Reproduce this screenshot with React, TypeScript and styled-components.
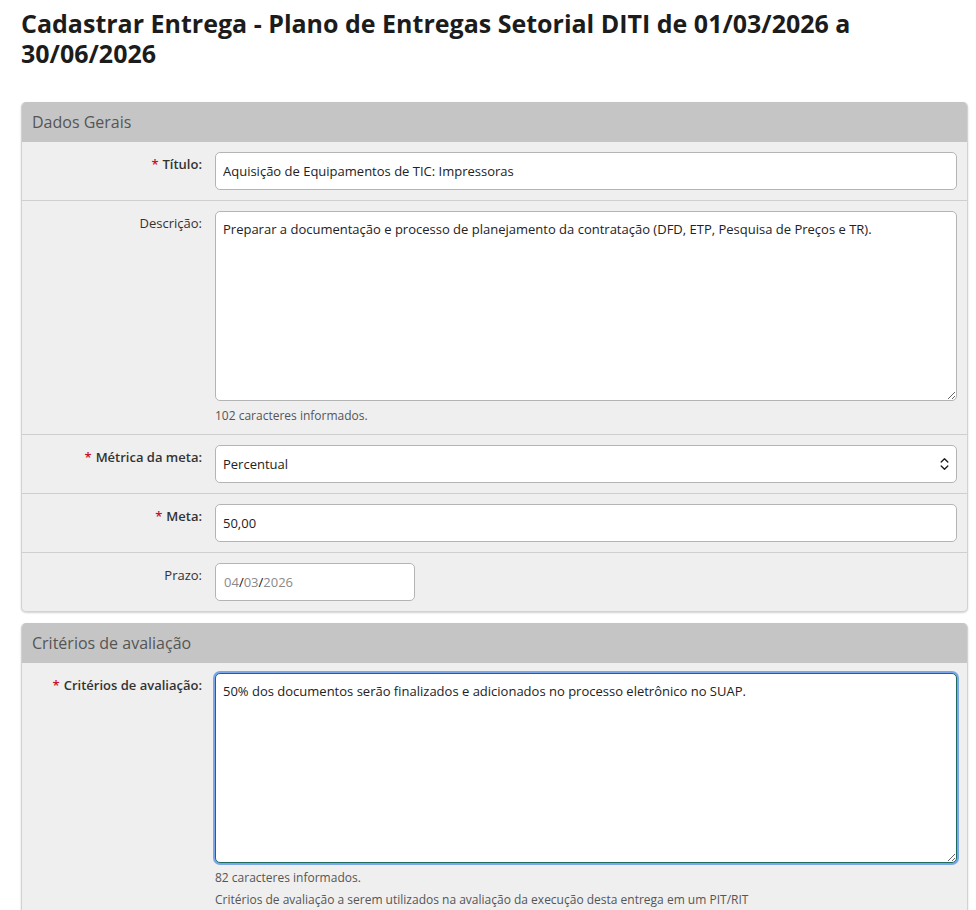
import React from "react";
import styled, { createGlobalStyle, css } from "styled-components";

const GlobalStyle = createGlobalStyle`
  html, body {
    margin: 0;
    padding: 0;
    background: #ffffff;
    font-family: "Open Sans", "Liberation Sans", sans-serif;
    color: #333;
  }
  * { box-sizing: border-box; }
`;

const Page = styled.div`
  padding: 8px 8px 0 21px;
`;

const Title = styled.h1`
  margin: 0 0 34px;
  font-size: 25px;
  line-height: 30px;
  font-weight: 700;
  color: #1c1c1c;
`;

const Panel = styled.section`
  background: #efefef;
  border: 1px solid #d2d2d2;
  border-top: none;
  border-radius: 5px;
  box-shadow: 0 1px 2px rgba(0, 0, 0, 0.18);
  margin-bottom: 11px;
  overflow: hidden;
`;

const PanelHeader = styled.h2`
  margin: 0;
  height: 40px;
  display: flex;
  align-items: center;
  padding: 0 10px;
  background: #c5c5c5;
  font-size: 16px;
  font-weight: 400;
  color: #555;
`;

const Row = styled.div`
  display: grid;
  grid-template-columns: 180px 1fr;
  column-gap: 13px;
  padding: 10px 10px 10px 0;
  & + & {
    border-top: 1px solid #cfcfcf;
  }
`;

const Label = styled.label<{ $required?: boolean }>`
  text-align: right;
  font-size: 13px;
  line-height: 20px;
  padding-top: 2px;
  color: #333;
  font-weight: ${(p) => (p.$required ? 600 : 400)};
`;

const Star = styled.span`
  color: #c8102e;
  margin-right: 4px;
`;

const Field = styled.div`
  display: flex;
  flex-direction: column;
  min-width: 0;
`;

const fieldBase = css`
  font-family: "Open Sans", "Liberation Sans", sans-serif;
  font-size: 13px;
  color: #222;
  background: #fff;
  border: 1px solid #b4b4b4;
  border-radius: 5px;
  outline: none;
`;

const TextInput = styled.input`
  ${fieldBase};
  width: 100%;
  height: 38px;
  padding: 0 7px;
`;

const TextArea = styled.textarea<{ $focused?: boolean }>`
  ${fieldBase};
  width: 100%;
  height: 190px;
  padding: 7px 7px;
  line-height: 20px;
  resize: vertical;
  display: block;
  ${(p) =>
    p.$focused &&
    css`
      border-color: #1e6b5c;
      box-shadow: 0 0 0 2px #7aa7ec;
    `}
`;

const SelectWrap = styled.div`
  position: relative;
  width: 100%;
`;

const Select = styled.select`
  ${fieldBase};
  width: 100%;
  height: 38px;
  padding: 0 28px 0 7px;
  appearance: none;
  -webkit-appearance: none;
`;

const SelectArrow = styled.svg`
  position: absolute;
  right: 8px;
  top: 50%;
  transform: translateY(-50%);
  pointer-events: none;
`;

const DateBox = styled.div`
  ${fieldBase};
  width: 200px;
  height: 38px;
  padding: 0 8px;
  display: flex;
  align-items: center;
  color: #8a8a8a;
`;

const DateSep = styled.span`
  color: #111;
`;

const Hint = styled.div<{ $gap?: number }>`
  margin-top: ${(p) => p.$gap ?? 6}px;
  font-size: 12px;
  line-height: 17px;
  color: #555;
`;

export default function App() {
  return (
    <>
      <GlobalStyle />
      <Page>
        <Title>
          Cadastrar Entrega - Plano de Entregas Setorial DITI de 01/03/2026 a 30/06/2026
        </Title>

        <Panel>
          <PanelHeader>Dados Gerais</PanelHeader>
          <Row>
            <Label $required>
              <Star>*</Star>Título:
            </Label>
            <Field>
              <TextInput defaultValue="Aquisição de Equipamentos de TIC: Impressoras" />
            </Field>
          </Row>
          <Row>
            <Label>Descrição:</Label>
            <Field>
              <TextArea defaultValue="Preparar a documentação e processo de planejamento da contratação (DFD, ETP, Pesquisa de Preços e TR)." />
              <Hint>102 caracteres informados.</Hint>
            </Field>
          </Row>
          <Row>
            <Label $required>
              <Star>*</Star>Métrica da meta:
            </Label>
            <Field>
              <SelectWrap>
                <Select defaultValue="Percentual">
                  <option>Percentual</option>
                  <option>Absoluto</option>
                </Select>
                <SelectArrow width="9" height="13" viewBox="0 0 9 13" fill="none">
                  <path d="M1.2 4.6 L4.5 1.3 L7.8 4.6" stroke="#222" strokeWidth="1.4" strokeLinecap="round" strokeLinejoin="round" />
                  <path d="M1.2 8.4 L4.5 11.7 L7.8 8.4" stroke="#222" strokeWidth="1.4" strokeLinecap="round" strokeLinejoin="round" />
                </SelectArrow>
              </SelectWrap>
            </Field>
          </Row>
          <Row>
            <Label $required>
              <Star>*</Star>Meta:
            </Label>
            <Field>
              <TextInput defaultValue="50,00" />
            </Field>
          </Row>
          <Row>
            <Label>Prazo:</Label>
            <Field>
              <DateBox>
                04<DateSep>/</DateSep>03<DateSep>/</DateSep>2026
              </DateBox>
            </Field>
          </Row>
        </Panel>

        <Panel>
          <PanelHeader>Critérios de avaliação</PanelHeader>
          <Row>
            <Label $required>
              <Star>*</Star>Critérios de avaliação:
            </Label>
            <Field>
              <TextArea
                $focused
                defaultValue="50% dos documentos serão finalizados e adicionados no processo eletrônico no SUAP."
              />
              <Hint>82 caracteres informados.</Hint>
              <Hint $gap={5}>
                Critérios de avaliação a serem utilizados na avaliação da execução desta entrega em um PIT/RIT
              </Hint>
            </Field>
          </Row>
        </Panel>
      </Page>
    </>
  );
}
